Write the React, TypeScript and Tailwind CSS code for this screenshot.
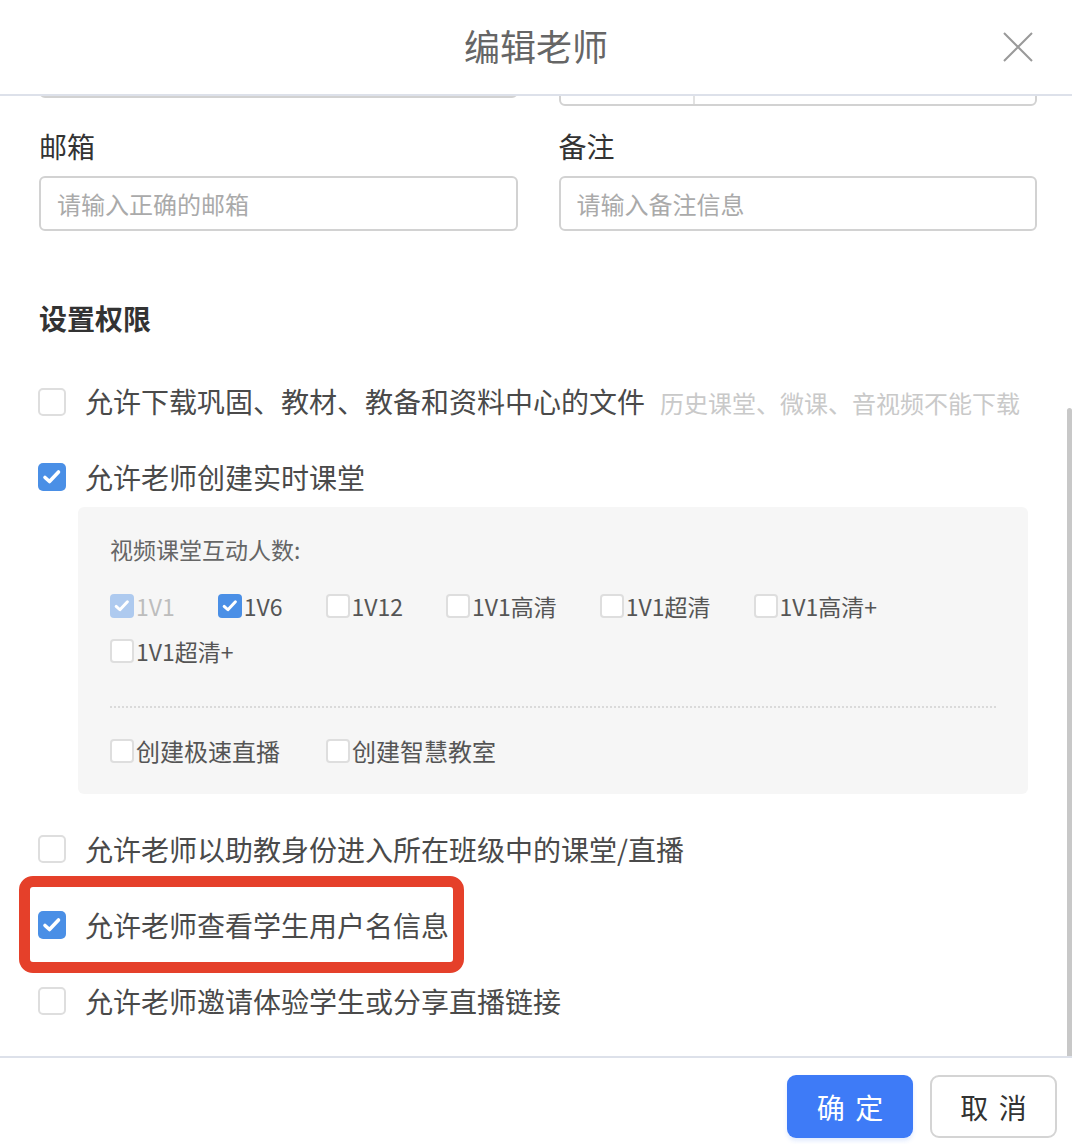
const font = { fontFamily: '"Noto Sans CJK SC", "Noto Sans", sans-serif' };

type BoxProps = { checked?: boolean; disabled?: boolean; small?: boolean };

const Box = ({ checked, disabled, small }: BoxProps) => {
  const size = small ? "w-[24px] h-[24px] rounded-[4px]" : "w-[28px] h-[28px] rounded-[5px]";
  if (checked) {
    return (
      <span
        className={`${size} shrink-0 flex items-center justify-center ${
          disabled ? "bg-[#aecaef]" : "bg-[#4a8fe6]"
        }`}
      >
        <svg viewBox="0 0 24 24" className={small ? "w-[20px] h-[20px]" : "w-[24px] h-[24px]"}>
          <polyline
            points="5,12.5 9.5,16.5 18.5,7"
            fill="none"
            stroke="#fff"
            strokeWidth="3.6"
            strokeLinecap="round"
            strokeLinejoin="round"
          />
        </svg>
      </span>
    );
  }
  return <span className={`${size} shrink-0 border-2 border-[#dedede] bg-white`} />;
};

const Row = ({ checked, children }: { checked?: boolean; children: React.ReactNode }) => (
  <div className="flex h-[40px] items-center gap-[19px] pl-[38px]">
    <Box checked={checked} />
    <span className="text-[28px] leading-[40px] text-[#4a4a4a]">{children}</span>
  </div>
);

const Option = ({
  label,
  checked,
  disabled,
  big,
}: {
  label: string;
  checked?: boolean;
  disabled?: boolean;
  big?: boolean;
}) => (
  <label className="flex h-[32px] items-center gap-[2px]">
    <Box small checked={checked} disabled={disabled} />
    <span
      className={`${big ? "text-[24px]" : "text-[23px]"} leading-[32px] ${
        disabled ? "text-[#bdbdbd]" : "text-[#555]"
      }`}
    >
      {label}
    </span>
  </label>
);

const Field = ({ label, placeholder }: { label: string; placeholder: string }) => (
  <div className="flex flex-col">
    <div className="h-[36px] text-[28px] leading-[36px] text-[#333]">{label}</div>
    <div className="mt-[12px] flex h-[55px] items-center rounded-[6px] border-2 border-[#d2d2d2] px-[16px] text-[24px] text-[#aaa]">
      {placeholder}
    </div>
  </div>
);

export default function App() {
  return (
    <div className="flex h-[1144px] w-[1072px] flex-col overflow-hidden bg-white" style={font}>
      <div className="grid h-[96px] shrink-0 grid-cols-[1fr_auto_1fr] items-center border-b-2 border-[#dde1ea]">
        <div />
        <div className="pb-[4px] text-[36px] text-[#666]">编辑老师</div>
        <div className="flex justify-end pr-[38px]">
          <svg viewBox="0 0 32 32" className="h-[32px] w-[32px]">
            <path d="M2 2 L30 30 M30 2 L2 30" stroke="#9a9a9a" strokeWidth="2" fill="none" />
          </svg>
        </div>
      </div>

      <div className="relative flex-1 overflow-hidden">
        <div className="absolute right-0 top-[312px] bottom-0 w-[5px] rounded-t-[3px] bg-[#c8c8c8]" />

        <div className="-mt-[52px] grid grid-cols-2 items-start gap-x-[41px] pl-[39px] pr-[35px]">
          <div className="h-[54px] rounded-[6px] border-2 border-[#d2d2d2]" />
          <div className="mt-[8px] flex h-[54px] rounded-[6px] border-2 border-[#d2d2d2]">
            <div className="w-[134px] border-r-2 border-[#e2e2e2]" />
          </div>
        </div>

        <div className="mt-[22px] grid grid-cols-2 gap-x-[41px] pl-[39px] pr-[35px]">
          <Field label="邮箱" placeholder="请输入正确的邮箱" />
          <Field label="备注" placeholder="请输入备注信息" />
        </div>

        <div className="mt-[69px] pl-[39px] text-[28px] font-bold leading-[36px] text-[#333]">设置权限</div>

        <div className="mt-[46px]">
          <Row>
            允许下载巩固、教材、教备和资料中心的文件
            <span className="ml-[15px] text-[24px] text-[#c9c9c9]">历史课堂、微课、音视频不能下载</span>
          </Row>
        </div>

        <div className="mt-[35px]">
          <Row checked>允许老师创建实时课堂</Row>
        </div>

        <div className="ml-[78px] mr-[44px] mt-[10px] rounded-[6px] bg-[#f6f6f6] px-[32px] pb-[27px] pt-[26px]">
          <div className="text-[23px] leading-[32px] text-[#666]">视频课堂互动人数:</div>
          <div className="mt-[25px] flex flex-wrap gap-x-[43px] gap-y-[13px]">
            <Option label="1V1" checked disabled />
            <Option label="1V6" checked />
            <Option label="1V12" />
            <Option label="1V1高清" />
            <Option label="1V1超清" />
            <Option label="1V1高清+" />
            <Option label="1V1超清+" />
          </div>
          <div className="mt-[39px] border-t-2 border-dotted border-[#dadada]" />
          <div className="mt-[27px] flex gap-x-[46px]">
            <Option big label="创建极速直播" />
            <Option big label="创建智慧教室" />
          </div>
        </div>

        <div className="mt-[35px]">
          <Row>允许老师以助教身份进入所在班级中的课堂/直播</Row>
        </div>

        <div className="mt-[36px] flex">
          <div className="relative">
            <Row checked>允许老师查看学生用户名信息</Row>
            <span className="absolute left-[19px] top-[-29px] h-[97px] w-[445px] rounded-[14px] border-[11px] border-[#e5402a]" />
          </div>
        </div>

        <div className="mt-[36px]">
          <Row>允许老师邀请体验学生或分享直播链接</Row>
        </div>
      </div>

      <div className="flex h-[88px] shrink-0 items-start justify-end gap-[17px] border-t-2 border-[#dde1ea] pr-[15px] pt-[17px]">
        <button className="h-[63px] w-[126px] rounded-[9px] bg-[#3e7bf7] pl-[2px] text-[28px] tracking-[2px] text-white shadow-[0_3px_4px_rgba(62,123,247,0.15)]">
          确 定
        </button>
        <button className="h-[63px] w-[127px] rounded-[9px] border-2 border-[#d4d4d4] bg-white pl-[2px] text-[28px] tracking-[2px] text-[#333]">
          取 消
        </button>
      </div>
    </div>
  );
}
